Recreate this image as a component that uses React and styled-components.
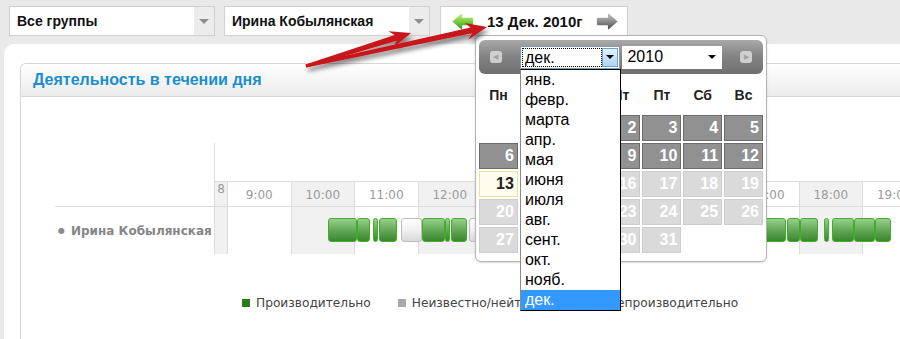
import React from "react";
import styled, { createGlobalStyle } from "styled-components";

const GlobalStyle = createGlobalStyle`
  html, body {
    margin: 0;
    padding: 0;
  }
  body {
    background: #e9e9e9;
    font-family: "Liberation Sans", Arial, sans-serif;
    overflow: hidden;
  }
  #root {
    width: 900px;
    height: 339px;
    overflow: hidden;
  }
`;

const hours = [
  { label: "8", w: 13, shade: true, small: true },
  ...[9, 10, 11, 12, 13, 14, 15, 16, 17, 18, 19].map((h) => ({
    label: `${h}:00`,
    w: 63.5,
    shade: h % 2 === 0,
  })),
];

// x coordinates on the page, converted to track offsets below
const TRACK_X = 215;
const bars = [
  [328, 357, "g"], [357, 370, "g"], [373, 378, "g"], [379, 397, "g"],
  [401, 422, "w"], [422, 445, "g"], [445, 450, "g"], [451, 467, "g"],
  [469, 492, "w"], [492, 530, "g"], [540, 600, "g"], [610, 700, "g"],
  [706, 740, "g"], [740, 786, "g"], [787, 800, "g"], [800, 818, "g"],
  [824, 829, "g"], [832, 854, "g"], [854, 875, "g"], [875, 891, "g"],
];

const months = [
  "янв.", "февр.", "марта", "апр.", "мая", "июня",
  "июля", "авг.", "сент.", "окт.", "нояб.", "дек.",
];

const weekDays = ["Пн", "Вт", "Ср", "Чт", "Пт", "Сб", "Вс"];
const weeks = [
  [null, null, 1, 2, 3, 4, 5],
  [6, 7, 8, 9, 10, 11, 12],
  [13, 14, 15, 16, 17, 18, 19],
  [20, 21, 22, 23, 24, 25, 26],
  [27, 28, 29, 30, 31, null, null],
];
const TODAY = 13;

function arrowPoints(sx, sy, tx, ty) {
  const head = 21, hw = 8.5, sw0 = 1.6, sw1 = 3;
  const dx = tx - sx, dy = ty - sy;
  const len = Math.hypot(dx, dy);
  const ux = dx / len, uy = dy / len;
  const nx = -uy, ny = ux;
  const bx = tx - ux * head, by = ty - uy * head;
  const cx = bx + ux * 5, cy = by + uy * 5;
  const pts = [
    [sx - nx * sw0, sy - ny * sw0],
    [cx - nx * sw1, cy - ny * sw1],
    [bx - nx * hw, by - ny * hw],
    [tx, ty],
    [bx + nx * hw, by + ny * hw],
    [cx + nx * sw1, cy + ny * sw1],
    [sx + nx * sw0, sy + ny * sw0],
  ];
  return pts.map((p) => p.map((v) => v.toFixed(1)).join(",")).join(" ");
}

function Arrow({ dir, tone }) {
  const id = `ar-${tone}`;
  const colors =
    tone === "green"
      ? ["#c6f08a", "#7ccc3c", "#3d9a22"]
      : ["#c4c4c4", "#8a8a8a", "#4f4f4f"];
  return (
    <svg width="25" height="17" viewBox="0 0 26 20">
      <defs>
        <linearGradient id={id} x1="0" y1="0" x2="0" y2="1">
          <stop offset="0" stopColor={colors[0]} />
          <stop offset="0.5" stopColor={colors[1]} />
          <stop offset="1" stopColor={colors[2]} />
        </linearGradient>
      </defs>
      <g transform={dir === "right" ? "translate(26 0) scale(-1 1)" : undefined}>
        <path
          d="M1 10 L11.5 1 Q12.5 0.5 12.5 2 L12.5 5.5 L24 5.5 Q25.5 5.5 25.5 7 L25.5 13 Q25.5 14.5 24 14.5 L12.5 14.5 L12.5 18 Q12.5 19.5 11.5 19 Z"
          fill={`url(#${id})`}
        />
      </g>
    </svg>
  );
}

function App() {
  return (
    <Page>
      <GlobalStyle />
      <TopBar>
        <Select>
          <SelectLabel>Все группы</SelectLabel>
          <SelectArrow />
        </Select>
        <Select>
          <SelectLabel>Ирина Кобылянская</SelectLabel>
          <SelectArrow />
        </Select>
        <DateBox>
          <Arrow dir="left" tone="green" />
          <DateText>13 Дек. 2010г</DateText>
          <Arrow dir="right" tone="gray" />
        </DateBox>
      </TopBar>

      <Panel>
        <Card>
          <CardHeader>Деятельность в течении дня</CardHeader>
          <CardBody>
            <Chart>
              <NameCol>
                <NameSpacer />
                <NameCell>
                  <Bullet>●</Bullet>
                  Ирина Кобылянская
                </NameCell>
              </NameCol>
              <Timeline>
                <TimelineTop />
                <HourRow>
                  {hours.map((h) => (
                    <HourCell key={h.label} $w={h.w} $shade={h.shade} $small={h.small}>
                      {h.label}
                    </HourCell>
                  ))}
                </HourRow>
                <DataRow>
                  {hours.map((h) => (
                    <DataCell key={h.label} $w={h.w} $shade={h.shade} />
                  ))}
                  {bars.map(([a, b, kind], i) => (
                    <Bar
                      key={i}
                      $kind={kind}
                      style={{ left: a - TRACK_X, width: b - a }}
                    />
                  ))}
                </DataRow>
              </Timeline>
            </Chart>
            <Legend>
              <LegendItem>
                <Swatch $color="#2d7a1c" />
                Производительно
              </LegendItem>
              <LegendItem>
                <Swatch $color="#a9a9a9" />
                Неизвестно/нейтрально
              </LegendItem>
              <LegendItem>
                <Swatch $color="#c62020" />
                Непроизводительно
              </LegendItem>
            </Legend>
          </CardBody>
        </Card>
      </Panel>

      <Calendar>
        <CalHeader>
          <NavButton>◀</NavButton>
          <MonthSelect>
            <MonthValue>дек.</MonthValue>
            <MonthButton>
              <Caret />
            </MonthButton>
            <MonthList>
              {months.map((m) => (
                <MonthItem key={m} $active={m === "дек."}>
                  {m}
                </MonthItem>
              ))}
            </MonthList>
          </MonthSelect>
          <YearSelect>
            2010
            <Caret />
          </YearSelect>
          <NavButton $right>▶</NavButton>
        </CalHeader>
        <WeekRow>
          {weekDays.map((d) => (
            <WeekDay key={d}>{d}</WeekDay>
          ))}
        </WeekRow>
        <DayGrid>
          {weeks.flat().map((d, i) => (
            <Day
              key={i}
              $state={d === null ? "empty" : d < TODAY ? "past" : d === TODAY ? "today" : "future"}
            >
              {d}
            </Day>
          ))}
        </DayGrid>
      </Calendar>

      <Pointers width="900" height="339" viewBox="0 0 900 339">
        <defs>
          <filter id="shadow" x="-20%" y="-50%" width="140%" height="200%">
            <feDropShadow dx="2" dy="4" stdDeviation="2" floodColor="#000" floodOpacity="0.45" />
          </filter>
        </defs>
        <g filter="url(#shadow)" fill="#c8141a">
          <polygon points={arrowPoints(306, 66, 411, 33)} />
          <polygon points={arrowPoints(306, 66, 487, 27)} />
        </g>
      </Pointers>
    </Page>
  );
}

export default App;

const Page = styled.div`
  position: relative;
  width: 900px;
  height: 339px;
  display: flex;
  flex-direction: column;
`;

const TopBar = styled.div`
  display: flex;
  gap: 9px;
  padding: 6px 0 0 9px;
  height: 30px;
`;

const Select = styled.div`
  width: 206px;
  height: 30px;
  box-sizing: border-box;
  background: #fff;
  border: 1px solid #cfcfcf;
  display: flex;
  align-items: stretch;
`;

const SelectLabel = styled.div`
  flex: 1;
  padding-left: 7px;
  display: flex;
  align-items: center;
  font-size: 14px;
  font-weight: bold;
  color: #111;
`;

const SelectArrow = styled.div`
  width: 20px;
  background: #ececec;
  display: flex;
  align-items: center;
  justify-content: center;
  &::after {
    content: "";
    border-left: 5px solid transparent;
    border-right: 5px solid transparent;
    border-top: 5px solid #8f8f8f;
  }
`;

const DateBox = styled.div`
  width: 188px;
  height: 30px;
  margin-left: 1px;
  box-sizing: border-box;
  background: #fff;
  border: 1px solid #cfcfcf;
  display: flex;
  align-items: center;
  padding-left: 9px;
  gap: 12px;
`;

const DateText = styled.div`
  font-size: 15px;
  font-weight: bold;
  color: #111;
  white-space: nowrap;
`;

const Panel = styled.div`
  flex: 1;
  margin: 8px 0 0 4px;
  background: #fff;
  border-top-left-radius: 10px;
  padding: 19px 0 0 16px;
  display: flex;
`;

const Card = styled.div`
  flex: 1;
  border: 1px solid #d6d6d6;
  border-right: none;
  border-bottom: none;
  border-top-left-radius: 6px;
  display: flex;
  flex-direction: column;
  overflow: hidden;
`;

const CardHeader = styled.div`
  height: 32px;
  line-height: 32px;
  padding-left: 12px;
  background: linear-gradient(#ffffff, #ebebeb);
  border-bottom: 1px solid #d6d6d6;
  font-size: 16px;
  font-weight: bold;
  color: #1a8fcc;
`;

const CardBody = styled.div`
  padding: 46px 0 0 34px;
`;

const Chart = styled.div`
  display: flex;
`;

const NameCol = styled.div`
  width: 159px;
  flex: none;
`;

const NameSpacer = styled.div`
  height: 63px;
`;

const NameCell = styled.div`
  height: 47px;
  border-top: 1px solid #dcdcdc;
  display: flex;
  align-items: center;
  padding-left: 3px;
  font-family: "DejaVu Sans", Verdana, sans-serif;
  font-size: 12px;
  font-weight: bold;
  color: #858585;
  white-space: nowrap;
`;

const Bullet = styled.span`
  font-size: 8px;
  margin-right: 6px;
  color: #8a8a8a;
`;

const Timeline = styled.div`
  flex: none;
  width: 760px;
  border-left: 1px solid #dcdcdc;
`;

const TimelineTop = styled.div`
  height: 38px;
`;

const HourRow = styled.div`
  display: flex;
  border-top: 1px solid #dcdcdc;
  border-bottom: 1px solid #dcdcdc;
`;

const HourCell = styled.div`
  flex: none;
  width: ${(p) => p.$w}px;
  height: 24px;
  box-sizing: border-box;
  border-right: 1px solid #dcdcdc;
  background: ${(p) => (p.$shade ? "#f1f1f1" : "#fff")};
  font-family: "DejaVu Sans", Verdana, sans-serif;
  font-size: 12px;
  color: #9a9a9a;
  display: flex;
  align-items: ${(p) => (p.$small ? "flex-start" : "center")};
  justify-content: center;
  padding-top: ${(p) => (p.$small ? "0" : "1px")};
  white-space: nowrap;
`;

const DataRow = styled.div`
  position: relative;
  display: flex;
  height: 47px;
`;

const DataCell = styled.div`
  flex: none;
  width: ${(p) => p.$w}px;
  box-sizing: border-box;
  border-right: 1px solid #dcdcdc;
  background: ${(p) => (p.$shade ? "#f1f1f1" : "#fff")};
`;

const Bar = styled.div`
  position: absolute;
  top: 11px;
  height: 24px;
  box-sizing: border-box;
  border-radius: 3px;
  border: 1px solid ${(p) => (p.$kind === "g" ? "#41ad29" : "#bdbdbd")};
  background: ${(p) =>
    p.$kind === "g"
      ? "linear-gradient(#99cf8e, #63a957 50%, #3c8631)"
      : "linear-gradient(#ffffff, #f0f0f0 50%, #d9d9d9)"};
`;

const Legend = styled.div`
  display: flex;
  gap: 27px;
  margin: 42px 0 0 187px;
`;

const LegendItem = styled.div`
  display: flex;
  align-items: center;
  gap: 6px;
  font-family: "DejaVu Sans", Verdana, sans-serif;
  font-size: 12.2px;
  color: #444;
  white-space: nowrap;
`;

const Swatch = styled.span`
  width: 8px;
  height: 8px;
  background: ${(p) => p.$color};
`;

const Calendar = styled.div`
  position: absolute;
  left: 475px;
  top: 35px;
  width: 292px;
  height: 227px;
  box-sizing: border-box;
  padding: 4px 3px 0;
  background: #fff;
  border: 1px solid #b4b4b4;
  border-radius: 6px;
  box-shadow: 0 1px 2px rgba(0, 0, 0, 0.15);
  z-index: 5;
`;

const CalHeader = styled.div`
  height: 34px;
  border-radius: 6px;
  background: linear-gradient(#a9a9a9, #858585 45%, #6f6f6f);
  display: flex;
  align-items: center;
  padding: 0 11px;
  gap: 2px;
`;

const NavButton = styled.div`
  width: 12px;
  height: 12px;
  border-radius: 3px;
  background: #cfcfcf;
  color: #a2a2a2;
  font-size: 7px;
  line-height: 12px;
  text-align: center;
  margin: ${(p) => (p.$right ? "0 0 0 16px" : "0 16px 0 0")};
`;

const MonthSelect = styled.div`
  position: relative;
  width: 101px;
  height: 23px;
  box-sizing: border-box;
  border: 1px solid #7f9db9;
  background: #fff;
  display: flex;
  padding: 1px;
`;

const MonthValue = styled.div`
  flex: 1;
  border: 1px dotted #000;
  font-size: 16px;
  line-height: 18px;
  padding-left: 2px;
  color: #000;
`;

const MonthButton = styled.div`
  width: 16px;
  box-sizing: border-box;
  border: 1px solid #6f9fd3;
  background: linear-gradient(#e3f1fd, #aed6f7);
  display: flex;
  align-items: center;
  justify-content: center;
`;

const Caret = styled.span`
  border-left: 4px solid transparent;
  border-right: 4px solid transparent;
  border-top: 4px solid #000;
`;

const MonthList = styled.div`
  position: absolute;
  left: -1px;
  top: 22px;
  width: 101px;
  box-sizing: border-box;
  border: 1px solid #000;
  border-left-color: #8a8a8a;
  background: #fff;
  z-index: 6;
`;

const MonthItem = styled.div`
  height: 20px;
  line-height: 20px;
  padding-left: 4px;
  font-size: 16px;
  color: ${(p) => (p.$active ? "#fff" : "#000")};
  background: ${(p) => (p.$active ? "#3399ff" : "#fff")};
`;

const YearSelect = styled.div`
  width: 100px;
  height: 23px;
  box-sizing: border-box;
  background: #fff;
  display: flex;
  align-items: center;
  justify-content: space-between;
  padding: 0 6px 0 5px;
  font-size: 16px;
  color: #000;
`;

const WeekRow = styled.div`
  display: grid;
  grid-template-columns: repeat(7, 1fr);
  gap: 2px;
  height: 41px;
  align-items: center;
`;

const WeekDay = styled.div`
  text-align: center;
  font-size: 14px;
  font-weight: bold;
  color: #222;
`;

const dayColors = {
  past: ["#919191", "#6c6c6c", "#fff"],
  today: ["#fffcee", "#f2e2a0", "#222"],
  future: ["#dadada", "#cdcdcd", "#fff"],
  empty: ["transparent", "transparent", "transparent"],
};

const DayGrid = styled.div`
  display: grid;
  grid-template-columns: repeat(7, 1fr);
  grid-auto-rows: 26px;
  gap: 2px;
`;

const Day = styled.div`
  box-sizing: border-box;
  background: ${(p) => dayColors[p.$state][0]};
  border: 1px solid ${(p) => dayColors[p.$state][1]};
  color: ${(p) => dayColors[p.$state][2]};
  font-size: 16px;
  font-weight: bold;
  text-align: right;
  padding-right: 3px;
  line-height: 24px;
`;

const Pointers = styled.svg`
  position: absolute;
  left: 0;
  top: 0;
  pointer-events: none;
  z-index: 10;
`;
